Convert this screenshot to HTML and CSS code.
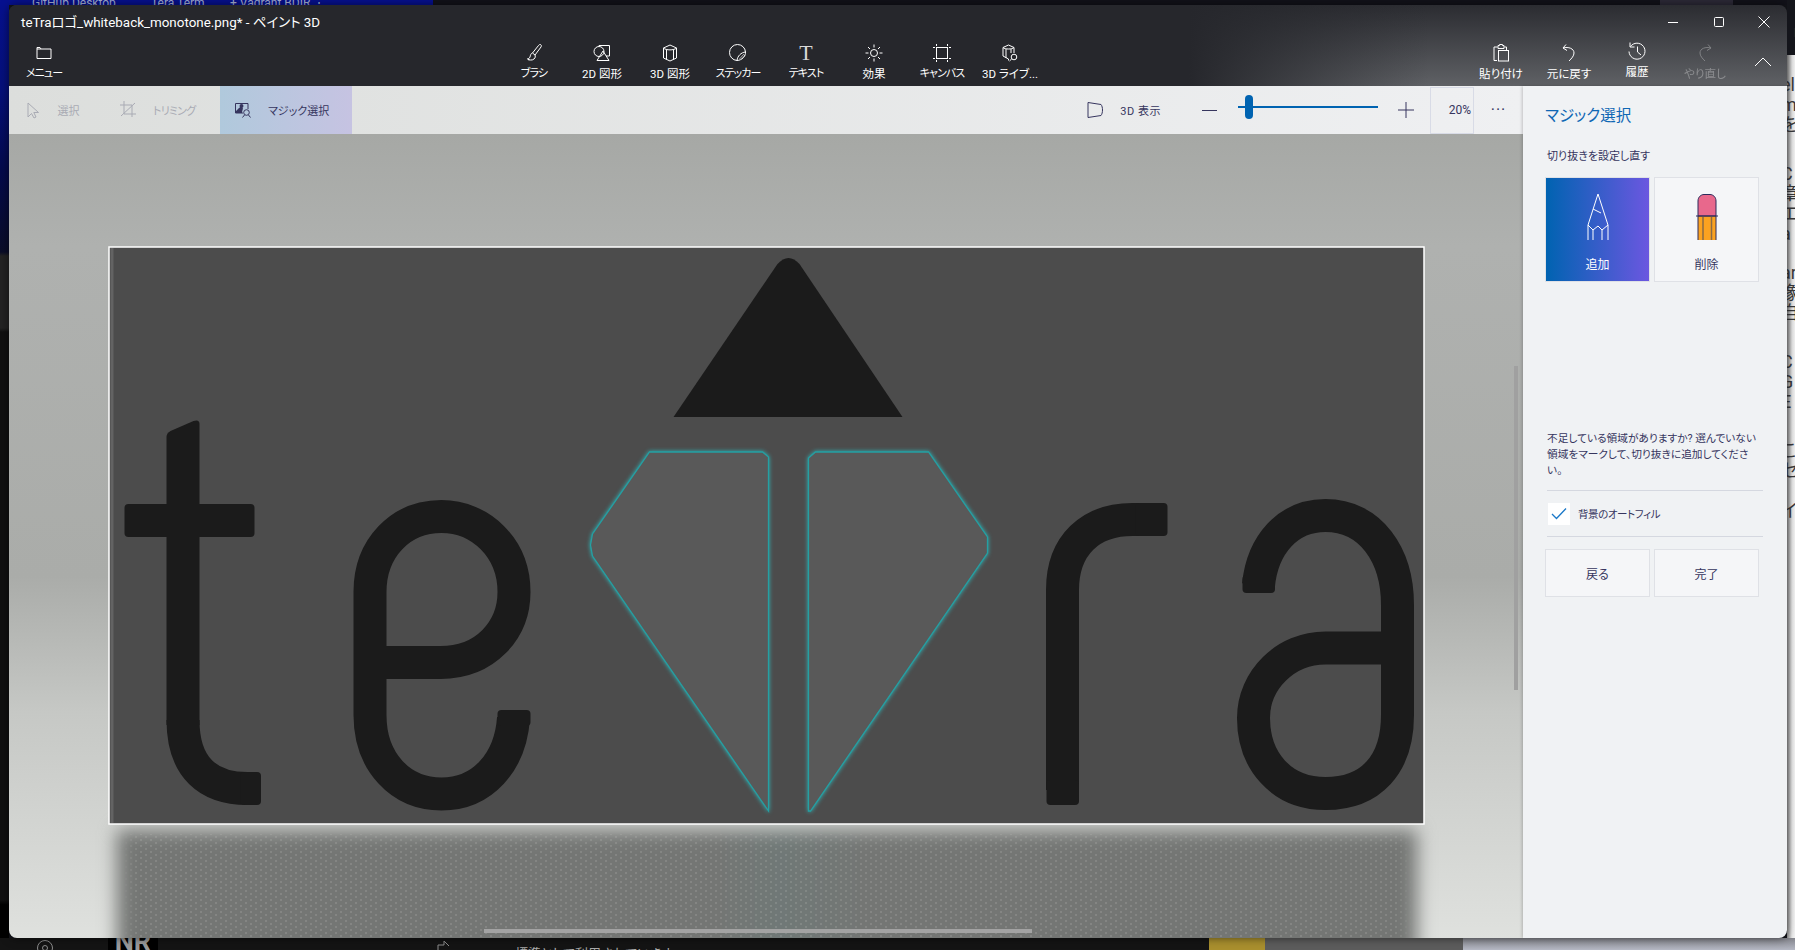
FILE: index.html
```html
<!DOCTYPE html>
<html lang="ja">
<head>
<meta charset="utf-8">
<title>ペイント 3D</title>
<link rel="stylesheet" href="styles.css">
</head>
<body>
<div class="desktop">
  <div class="wall-left"></div>
  <div class="wall-top">
    <span class="tab tab-a">GitHub Desktop</span>
    <span class="tab tab-b">Tera Term</span>
    <span class="tab tab-c">+ Vagrant BDIR ⋮</span>
    <span class="tab-block"></span>
  </div>
  <div class="wall-right">
    <div class="avatar">K</div>
    <div class="frag-page">
      <p class="frag first">el<br>m<br>を</p>
      <p class="frag">C<br>章<br>エ<br>a</p>
      <p class="frag near">ar<br>像<br>自</p>
      <p class="frag">C<br>G<br>E</p>
      <p class="frag">こ<br>セ<br>)<br>イ</p>
    </div>
  </div>
  <div class="wall-bottom">
    <svg class="low-ring" width="18" height="12" viewBox="0 0 18 12"><circle cx="9" cy="10" r="7.500" class="low-ln"/><circle cx="9" cy="10" r="2.500" class="low-ln"/></svg>
    <span class="nr">NR</span>
    <svg class="low-share" width="14" height="12" viewBox="0 0 14 12"><path d="M2 12V7H8V3L13 8" class="low-ln"/></svg>
    <span class="low-text">標準として利用されています。</span>
    <span class="low-yellow"></span>
    <span class="low-gray"></span>
    <span class="low-light"></span>
  </div>

  <main class="window">
    <header class="header">
      <div class="titlebar">
        <div class="title">teTraロゴ_whiteback_monotone.png* - ペイント 3D</div>
        <div class="controls">
          <span class="ctl"><svg width="12" height="12" viewBox="0 0 12 12"><path d="M1 6.500H11" class="wh"/></svg></span>
          <span class="ctl"><svg width="12" height="12" viewBox="0 0 12 12"><rect x="1.500" y="1.500" width="9" height="9" rx="1" class="wh"/></svg></span>
          <span class="ctl"><svg width="12" height="12" viewBox="0 0 12 12"><path d="M.5 .5L11.500 11.500M11.500 .5L.5 11.500" class="wh"/></svg></span>
        </div>
      </div>
      <nav class="ribbon">
        <div class="rib"><span class="ic"><svg width="20" height="20" viewBox="0 0 20 20"><path d="M3 4.500V15.500H17V6H7L6 4.500Z" class="wh"/><path d="M3 6H7" class="wh"/></svg></span><span class="lb lb-k">メニュー</span></div>
        <div class="tools">
          <div class="rib"><span class="ic"><svg width="20" height="20" viewBox="0 0 20 20"><path d="M16.500 1.500C17.500 2 17.500 3 17 4L11 12L8.500 10L14.500 2.500C15 1.800 15.800 1.300 16.500 1.500Z" class="wh"/><path d="M8.500 10C6.500 10.500 6.500 12.500 6 14C5.500 15.500 4.500 15.500 3.500 15.800C5 17 8 17.800 10 16C11.500 14.500 11.500 13.500 11 12" class="wh"/><path d="M5 17.500L4 16" class="wh"/></svg></span><span class="lb lb-k">ブラシ</span></div>
          <div class="rib"><span class="ic"><svg width="20" height="20" viewBox="0 0 20 20"><circle cx="7" cy="8.500" r="5" class="wh"/><path d="M7 3.500V2.500H17.500V13H14" class="wh"/><path d="M11 8L17 17.500H5Z" class="wh"/></svg></span><span class="lb">2D 図形</span></div>
          <div class="rib"><span class="ic"><svg width="20" height="20" viewBox="0 0 20 20"><path d="M10 2L16.500 5V15L10 18L3.500 15V5Z" class="wh"/><path d="M3.500 5C6 7.500 14 7.500 16.500 5M6.500 6.500V16.500M13.500 6.500V16.500" class="wh"/></svg></span><span class="lb">3D 図形</span></div>
          <div class="rib"><span class="ic"><svg width="20" height="20" viewBox="0 0 20 20"><path d="M17.500 9A8 8 0 1 0 9 17.500" class="wh"/><path d="M9 17.500C9.500 13 13 9.500 17.500 9C18 12.500 14 17.500 9 17.500Z" class="wh"/><path d="M11.500 16L16 11M13.500 16.300L17 12.500" class="wh-thin"/></svg></span><span class="lb lb-k">ステッカー</span></div>
          <div class="rib"><span class="ic ic-t">T</span><span class="lb lb-k">テキスト</span></div>
          <div class="rib"><span class="ic"><svg width="20" height="20" viewBox="0 0 20 20"><circle cx="10" cy="10" r="3.500" class="wh"/><path d="M10 1.500V4.500M10 15.500V18.500M1.500 10H4.500M15.500 10H18.500M4 4L6 6M14 14L16 16M16 4L14 6M6 14L4 16" class="wh"/></svg></span><span class="lb">効果</span></div>
          <div class="rib"><span class="ic"><svg width="20" height="20" viewBox="0 0 20 20"><rect x="4.500" y="4.500" width="11" height="11" class="wh"/><path d="M4.500 1V3M4.500 17V19M15.500 1V3M15.500 17V19M1 4.500H3M17 4.500H19M1 15.500H3M17 15.500H19" class="wh"/></svg></span><span class="lb lb-k">キャンバス</span></div>
          <div class="rib"><span class="ic"><svg width="20" height="20" viewBox="0 0 20 20"><path d="M8.500 2L14 4.500V10M3 4.500L8.500 2M3 4.500V13L8.500 16V17.500" class="wh"/><path d="M3 4.500C5 6.500 12 6.500 14 4.500M6 6V15M11 6V10" class="wh"/><circle cx="14" cy="14" r="2.800" class="wh"/><path d="M11.800 15.800L9.500 18" class="wh"/></svg></span><span class="lb">3D ライブ...</span></div>
        </div>
        <div class="actions">
          <div class="rib"><span class="ic"><svg width="20" height="20" viewBox="0 0 20 20"><path d="M6 17.500H3V4H6.500M13.500 4H15.500V7" class="wh"/><path d="M7 2.500H8.500V1.500H11.500V2.500H13V5.500H7Z" class="wh"/><rect x="7.500" y="7.500" width="10" height="10.500" class="wh"/></svg></span><span class="lb">貼り付け</span></div>
          <div class="rib"><span class="ic"><svg width="20" height="20" viewBox="0 0 20 20"><path d="M7 1.500L4 5L8 7.500" class="wh"/><path d="M4 5C9.500 3.500 15 5.500 15 10C15 13 12.500 15.500 10 18" class="wh"/></svg></span><span class="lb">元に戻す</span></div>
          <div class="rib rib-up"><span class="ic"><svg width="20" height="20" viewBox="0 0 20 20"><path d="M3.500 5.500A8 8 0 1 1 2 10.500" class="wh"/><path d="M3 1.500V6H7.500M10.500 5.500V11L14 14" class="wh"/></svg></span><span class="lb">履歴</span></div>
          <div class="rib rib-off"><span class="ic"><svg width="20" height="20" viewBox="0 0 20 20"><path d="M13 1.500L16 5L12 7.500" class="wh"/><path d="M16 5C10.500 3.500 5 5.500 5 10C5 13 7.500 15.500 10 18" class="wh"/></svg></span><span class="lb">やり直し</span></div>
        </div>
        <div class="chev"><svg width="18" height="10" viewBox="0 0 18 10"><path d="M1 9L9 1L17 9" class="wh"/></svg></div>
      </nav>
    </header>

    <div class="body">
      <div class="main">
        <div class="toolbar">
          <div class="tb tb-off tb-select">
            <svg width="16" height="20" viewBox="0 0 16 20"><path d="M3 3V17L6.500 13.500L9 18L11 17L8.800 12.500H13.500Z" class="ln"/></svg>
            <span>選択</span>
          </div>
          <div class="tb tb-off tb-trim">
            <svg width="16" height="18" viewBox="0 0 16 18"><path d="M0 4H12V16M4 0V13H16M1 15L15 2" class="ln"/></svg>
            <span class="tight">トリミング</span>
          </div>
          <div class="tb tb-on">
            <svg width="16" height="16" viewBox="0 0 16 16"><path d="M8 11H.5V1.500H13V7" class="ln"/><path d="M.5 11V9.500L4 6C5 5 7 5 8 6.500C8 6.500 7 9 7 11ZM4.500 4A2 2 0 1 1 8.500 4A2 2 0 1 1 4.500 4Z" class="fl"/><circle cx="11.500" cy="10.500" r="2.800" class="ln"/><path d="M9.500 13L7.500 15.500M13.500 13L15.500 15.500" class="ln"/></svg>
            <span>マジック選択</span>
          </div>
          <div class="tb-right">
            <div class="view">
              <svg width="18" height="18" viewBox="0 0 18 18"><path d="M1 1.500L14 3.500C16 6 16 12 14 14.500L1 16.500Z" class="ln"/></svg>
              <span class="loose">3D 表示</span>
            </div>
            <svg class="minus" width="16" height="16" viewBox="0 0 16 16"><path d="M0 8.500H15" class="ln"/></svg>
            <div class="slider"><span class="thumb"></span></div>
            <svg class="plus" width="16" height="16" viewBox="0 0 16 16"><path d="M0 8H16M8 0V16" class="ln"/></svg>
            <div class="zoombox">20%</div>
            <div class="dots">···</div>
          </div>
        </div>

        <div class="canvas">
          <div class="floor"></div>
          <div class="floor-dots"></div>
          <svg class="art" width="1318" height="580" viewBox="107.500 246 1318 580">
            <rect x="108.500" y="247" width="1315" height="577" class="art-bg"/>
            <rect x="110" y="248" width="3" height="575" class="art-edge"/>
            <path d="M673 417L777 264Q788 252 799 264L902 417Z" class="ink"/>
            <path d="M166 437Q166 433 170 431L193 421Q199 419 199 424V725H166Z" class="ink"/>
            <rect x="124" y="504" width="130" height="33" rx="4" class="ink"/>
            <path d="M182.500 720C182.500 768 208 788.500 247 788.500H252" class="st"/>
            <rect x="240" y="772" width="20.500" height="33" rx="4" class="ink"/>
            <path d="M369.500 662.500H440C485 662.500 513.500 630 513.500 592C513.500 548 480 516.500 441 516.500C400 516.500 369.500 548 369.500 592V715C369.500 762 400 794 441 794C482 794 510 762 513 718" class="st"/>
            <rect x="497" y="710" width="33" height="16" rx="4" class="ink"/>
            <path d="M649 452H762L768 457V811L592 556L590 545L592 534Z" class="gem"/>
            <path d="M815 452H928L987 537V553L810 811L808 811V458Z" class="gem"/>
            <path d="M1062 790V590C1062 545 1090 519.500 1132 519.500H1155" class="st"/>
            <rect x="1046" y="780" width="32.500" height="25" rx="4" class="ink"/>
            <rect x="1135" y="503" width="32" height="33" rx="4" class="ink"/>
            <path d="M1258 585C1262 545 1287 515.500 1325 515.500C1370 515.500 1397 555 1397 605V715C1397 765 1370 793.500 1325 793.500C1280 793.500 1253 760 1253 718C1253 680 1285 648 1325 648H1397" class="st"/>
            <rect x="1242" y="575" width="32.500" height="18" rx="4" class="ink"/>
          </svg>
          <div class="vbar"></div>
          <div class="hbar"></div>
        </div>
      </div>

      <aside class="panel">
        <h1 class="p-title">マジック選択</h1>
        <p class="p-sub">切り抜きを設定し直す</p>
        <div class="choice">
          <div class="tile tile-on">
            <svg width="24" height="48" viewBox="0 0 24 48"><path d="M12 1L2 32V47M12 1L22 32V47M7 16L15 20M2 32L7 37L12 33L16 37L22 32M7 37V47M16 37V47" class="wh"/></svg>
            <span>追加</span>
          </div>
          <div class="tile">
            <svg width="24" height="48" viewBox="0 0 24 48">
              <rect x="3" y="23" width="18" height="24" class="pencil-body"/>
              <path d="M3 23V8C3 4 6 1.500 9 1.500H15C18 1.500 21 4 21 8V23Z" class="eraser"/>
              <path d="M8 23V47M16.500 23V47" class="pencil-grain"/>
              <path d="M1 23H23M3 23V47M21 23V47" class="pencil-line"/>
            </svg>
            <span>削除</span>
          </div>
        </div>
        <p class="p-help">不足している領域がありますか? 選んでいない領域をマークして、切り抜きに追加してください。</p>
        <div class="autofill">
          <span class="checkbox"><svg width="16" height="13" viewBox="0 0 16 13"><path d="M1 7L5.500 11.500L15 1.500" class="tick"/></svg></span>
          <span class="af-label">背景のオートフィル</span>
        </div>
        <div class="choice choice-low">
          <div class="btn">戻る</div>
          <div class="btn">完了</div>
        </div>
      </aside>
    </div>
  </main>
</div>
</body>
</html>
```
FILE: styles.css
```css
* { box-sizing: border-box; }
html, body { margin: 0; padding: 0; }
body {
  font-family: Roboto, "Noto Sans CJK JP", sans-serif;
  font-feature-settings: "palt";
  background: #121318;
}
p, h1 { margin: 0; font-weight: 400; }

.desktop {
  position: relative;
  width: 1795px;
  height: 950px;
  overflow: hidden;
  background: #14151b;
}
.wall-left {
  position: absolute;
  left: 0;
  top: 0;
  width: 9px;
  height: 950px;
  background: linear-gradient(#06108f 0, #05107a 90px, #040a4c 170px, #0a0d28 252px, #232323 256px, #232323 328px, #101010 332px, #101010 900px, #000 905px);
}
.wall-top {
  position: absolute;
  left: 0;
  top: 0;
  width: 100%;
  height: 5px;
  background: linear-gradient(to right, #06108f 0, #06108f 433px, #12121a 433px);
  overflow: hidden;
}
.tab {
  position: absolute;
  top: -4px;
  font-size: 12px;
  line-height: 14px;
  color: #a9b3d6;
  white-space: nowrap;
}
.tab-a { left: 32px; }
.tab-b { left: 151px; }
.tab-c { left: 230px; }
.tab-block {
  position: absolute;
  left: 1660px;
  top: 0;
  width: 73px;
  height: 5px;
  background: #2d2a38;
}

.wall-right {
  position: absolute;
  left: 1787px;
  top: 0;
  width: 8px;
  height: 950px;
  background: linear-gradient(to right, #8f8f8f 0, #e9e9e9 5px, #f4f4f4 100%);
  overflow: hidden;
}
.avatar {
  position: absolute;
  left: 0;
  top: 23px;
  width: 20px;
  height: 20px;
  border-radius: 50%;
  background: #e6e6e6;
  color: #222;
  font-size: 12px;
  font-weight: 700;
  line-height: 20px;
  text-align: center;
  z-index: 1;
}
.avatar::before {
  content: "";
  position: absolute;
  left: -1px;
  top: -23px;
  width: 30px;
  height: 55px;
  background: #14151b;
  z-index: -1;
}
.frag-page {
  position: absolute;
  left: -6px;
  top: 0;
  width: 60px;
}
.frag {
  font-size: 18px;
  line-height: 20px;
  color: #3a3a3c;
  margin-top: 29px;
}
.frag.first { margin-top: 75px; }
.frag.near { margin-top: 19px; }

.wall-bottom {
  position: absolute;
  left: 0;
  top: 938px;
  width: 100%;
  height: 12px;
  background: #141414;
  overflow: hidden;
}
.low-ring { position: absolute; left: 36px; top: 0; }
.low-share { position: absolute; left: 436px; top: 0; }
.low-ln { fill: none; stroke: #8c8c8c; stroke-width: 1; }
.nr {
  position: absolute;
  left: 108px;
  top: -8px;
  width: 50px;
  height: 20px;
  background: #000;
  color: #9a9a9a;
  font-size: 27px;
  font-weight: 700;
  line-height: 24px;
  text-align: center;
}
.low-text {
  position: absolute;
  left: 515px;
  top: 8px;
  font-size: 13px;
  line-height: 16px;
  color: #aaa;
  white-space: nowrap;
}
.low-yellow, .low-gray, .low-light { position: absolute; top: 0; height: 12px; }
.low-yellow { left: 1209px; width: 56px; background: #a98f2e; }
.low-gray { left: 1265px; width: 198px; background: #5c5c5c; }
.low-light { left: 1463px; width: 332px; background: linear-gradient(#84858c, #b5b8c4); }

.window {
  position: absolute;
  left: 9px;
  top: 5px;
  width: 1778px;
  height: 933px;
  border-radius: 8px;
  overflow: hidden;
  display: flex;
  flex-direction: column;
  box-shadow: 0 0 10px rgba(0, 0, 0, .55);
}

.header {
  height: 81px;
  flex: none;
  color: #fff;
  background:
    linear-gradient(to right, #26272c 1180px, rgba(38, 39, 44, 0) 1420px),
    linear-gradient(#2b2c31, #5f6165);
}
.titlebar { height: 33px; display: flex; align-items: center; }
.title {
  padding: 3px 0 0 12px;
  font-size: 13.400px;
  line-height: 18px;
  white-space: nowrap;
}
.controls { margin-left: auto; display: flex; }
.ctl {
  width: 45.500px;
  height: 33px;
  display: flex;
  align-items: center;
  justify-content: center;
}

.wh { fill: none; stroke: #fff; stroke-width: 1; }
.wh-thin { fill: none; stroke: #fff; stroke-width: .6; }

.ribbon { height: 48px; display: flex; padding-left: 1px; }
.tools { display: flex; margin-left: 422px; }
.actions { display: flex; margin-left: 423px; }
.rib {
  width: 68px;
  height: 48px;
  padding-top: 5px;
  display: flex;
  flex-direction: column;
  align-items: center;
}
.rib-up { padding-top: 3px; }
.rib-off { opacity: .3; }
.ic {
  width: 20px;
  height: 20px;
  display: flex;
  align-items: center;
  justify-content: center;
}
.ic-t {
  font-family: "Liberation Serif", serif;
  font-size: 22px;
  line-height: 20px;
  color: #d8d8d8;
}
.lb {
  margin-top: 3px;
  font-size: 11.500px;
  line-height: 16px;
  white-space: nowrap;
}
.lb-k {
  font-size: 11px;
  letter-spacing: -.9px;
}
.chev {
  width: 48px;
  height: 48px;
  display: flex;
  align-items: center;
  justify-content: center;
}

.body { flex: 1; display: flex; min-height: 0; }
.main { flex: 1; min-width: 0; display: flex; flex-direction: column; }

.toolbar {
  height: 48px;
  flex: none;
  display: flex;
  align-items: stretch;
  background: linear-gradient(to right, #dcdedc, #eff0f2);
  font-size: 11px;
  color: #36355e;
}
.ln { fill: none; stroke: currentColor; stroke-width: 1; }
.fl { fill: currentColor; }
.tb {
  display: flex;
  align-items: center;
  gap: 17px;
  white-space: nowrap;
}
.tb-off { color: #a9abb4; }
.tb-select { width: 95.500px; padding-left: 15.500px; }
.tb-trim { width: 115.500px; padding-left: 15.500px; }
.tight { letter-spacing: -.8px; }
.loose { letter-spacing: .5px; }
.tb-on {
  width: 132px;
  padding-left: 15px;
  background: linear-gradient(to right, #b0c9dc, #c6c3e2);
}
.tb-right { margin-left: auto; display: flex; align-items: center; }
.view { display: flex; align-items: center; gap: 15px; white-space: nowrap; }
.minus { margin-left: 41px; }
.slider {
  position: relative;
  width: 140px;
  height: 2px;
  margin-left: 20px;
  margin-top: -6px;
  background: #0063b1;
}
.thumb {
  position: absolute;
  left: 7px;
  top: -11px;
  width: 8px;
  height: 24px;
  border-radius: 4px;
  background: #0063b1;
}
.plus { margin-left: 20px; }
.zoombox {
  width: 44px;
  height: 47px;
  margin-left: 16px;
  border: 1px solid #d8dbe6;
  display: flex;
  align-items: center;
  justify-content: flex-end;
  padding-right: 2px;
  font-size: 12px;
  white-space: nowrap;
}
.dots {
  width: 49px;
  text-align: center;
  font-size: 16px;
  line-height: 1;
  letter-spacing: 1px;
}

.canvas {
  position: relative;
  flex: 1;
  overflow: hidden;
  background: linear-gradient(#a6a8a5 0, #afb1af 14%, #aaaca9 55%, #c6c8c5 72%, #dfe1de 100%);
}
.floor {
  position: absolute;
  left: 108px;
  top: 696px;
  width: 1300px;
  height: 140px;
  background:
    linear-gradient(to right, transparent 46%, rgba(95, 130, 130, .2) 51%, transparent 58%),
    #747674;
  filter: blur(9px);
}
.floor-dots {
  position: absolute;
  left: 112px;
  top: 700px;
  width: 1292px;
  height: 104px;
  background-image:
    radial-gradient(ellipse 1.300px .8px at center, rgba(205, 205, 200, .18) 99%, transparent),
    radial-gradient(ellipse 1.300px .8px at center, rgba(205, 205, 200, .18) 99%, transparent);
  background-size: 10px 6px, 10px 6px;
  background-position: 0 0, 5px 3px;
  -webkit-mask-image: linear-gradient(to right, transparent 0, #000 16px, #000 calc(100% - 16px), transparent 100%);
  mask-image: linear-gradient(to right, transparent 0, #000 16px, #000 calc(100% - 16px), transparent 100%);
}
.art { position: absolute; left: 98.500px; top: 112px; }
.art-bg { fill: #4c4c4c; stroke: #fff; stroke-width: 1.500; }
.art-edge { fill: #636363; }
.ink { fill: #1b1b1b; }
.st { fill: none; stroke: #1b1b1b; stroke-width: 33; }
.gem {
  fill: #595959;
  stroke: #25a0a3;
  stroke-width: 1.300;
  filter: drop-shadow(0 0 2px #2fb5b8);
}
.vbar {
  position: absolute;
  left: 1505px;
  top: 232px;
  width: 4px;
  height: 324px;
  background: #a0a0a0;
}
.hbar {
  position: absolute;
  left: 475px;
  top: 795px;
  width: 548px;
  height: 4px;
  background: #a3a3a3;
}

.panel {
  width: 264px;
  flex: none;
  background: #f0f2f4;
  padding: 0 27px 0 22px;
  color: #36355e;
  box-shadow: -1px 0 3px rgba(0, 0, 0, .2);
  position: relative;
}
.p-title {
  margin: 19px 0 0 0;
  font-size: 15.500px;
  line-height: 22px;
  color: #0f67b4;
}
.p-sub {
  margin: 22px 0 0 2px;
  font-size: 11px;
  line-height: 16px;
}
.choice { display: flex; gap: 4px; margin-top: 12px; }
.tile {
  width: 105px;
  height: 105px;
  border: 1px solid #dfe1e6;
  background: #f5f6f8;
  display: flex;
  flex-direction: column;
  align-items: center;
  padding-top: 15px;
  font-size: 12px;
  line-height: 16px;
}
.tile span { margin-top: 16px; }
.tile-on {
  background: linear-gradient(to right, #0063b1, #6b57e0);
  color: #fff;
}
.pencil-body { fill: #fba220; }
.eraser {
  fill: #e8688c;
  stroke: #2b2b5c;
  stroke-width: 1;
}
.pencil-grain { fill: none; stroke: #8a6a45; stroke-width: 1.500; }
.pencil-line { fill: none; stroke: #2b2b5c; stroke-width: 1; }
.p-help {
  margin: 149px 0 0 2px;
  width: 211px;
  font-size: 10.700px;
  line-height: 16px;
}
.autofill {
  width: 216px;
  height: 47px;
  margin: 11px 0 0 2px;
  padding-left: 1px;
  border-top: 1px solid #d5d8e0;
  border-bottom: 1px solid #d5d8e0;
  display: flex;
  align-items: center;
  gap: 8px;
  font-size: 10.500px;
}
.af-label { letter-spacing: -.4px; }
.checkbox {
  width: 22px;
  height: 22px;
  background: #fff;
  display: flex;
  align-items: center;
  justify-content: center;
}
.tick { fill: none; stroke: #1a78c8; stroke-width: 1.300; }
.choice-low { margin-top: 12px; }
.btn {
  width: 105px;
  height: 48px;
  border: 1px solid #dfe1e6;
  background: #f5f6f8;
  display: flex;
  align-items: center;
  justify-content: center;
  font-size: 12px;
}
```
